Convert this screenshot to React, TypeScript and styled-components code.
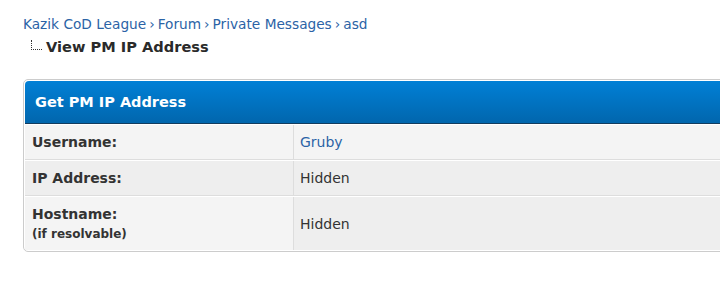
import styled, { createGlobalStyle } from 'styled-components';

const GlobalStyle = createGlobalStyle`
	body {
		margin: 0;
		background: #fff;
		font-family: "DejaVu Sans", Verdana, sans-serif;
		font-size: 13px;
		color: #333;
	}
`;

const Page = styled.div`
	padding: 15px 0 0 23px;
	overflow: hidden;
	height: 299px;
	box-sizing: border-box;
`;

const Breadcrumb = styled.nav`
	display: flex;
	font-size: 13.7px;
	line-height: 18px;
`;

const Crumb = styled.a`
	color: #2b63a6;
	text-decoration: none;
`;

const Sep = styled.span`
	color: #2b63a6;
	padding: 0 3px;
`;

const TitleRow = styled.div`
	display: flex;
	align-items: flex-end;
	gap: 4px;
	margin: 5px 0 0 8px;
`;

const TreeIcon = styled.span`
	width: 10px;
	height: 9px;
	margin-bottom: 6px;
	border-left: 1px dotted #333;
	border-bottom: 1px dotted #333;
`;

const Title = styled.h1`
	margin: 0;
	font-size: 14.6px;
	line-height: 18px;
	font-weight: bold;
	color: #2a2a2a;
`;

const Panel = styled.div`
	margin-top: 23px;
	width: 740px;
	border: 1px solid #ccc;
	border-radius: 5px;
	padding: 1px;
	background: #fff;
	overflow: hidden;
`;

const PanelHead = styled.div`
	height: 42px;
	display: flex;
	align-items: center;
	padding-left: 10px;
	background: linear-gradient(#0180d6, #0166ad);
	border-bottom: 1px solid #133c5e;
	border-radius: 4px 4px 0 0;
	color: #fff;
	font-weight: bold;
	font-size: 14.5px;
`;

const Row = styled.div<{ $h: number; $bg: string; $bgRight: string }>`
	display: grid;
	grid-template-columns: 269px 1fr;
	box-sizing: border-box;
	height: ${p => p.$h}px;
	border-top: 1px solid #fff;
	border-bottom: 1px solid #ddd;
	background: ${p => p.$bg};

	&:first-of-type {
		border-top: none;
	}

	&:last-child {
		border-bottom: none;
	}

	& > div:last-child {
		background: ${p => p.$bgRight};
	}
`;

const Label = styled.div`
	display: flex;
	flex-direction: column;
	justify-content: center;
	padding-left: 7px;
	border-right: 1px solid #ddd;
	box-shadow: 1px 0 0 #fff;
	font-weight: bold;
	font-size: 14px;
	line-height: 20px;
	color: #333;
`;

const Hint = styled.span`
	font-size: 12px;
`;

const Value = styled.div`
	display: flex;
	align-items: center;
	padding-left: 6px;
	font-size: 14px;
	color: #333;
`;

const ValueLink = styled.a`
	color: #2b63a6;
	text-decoration: none;
`;

const App = () => {
	const crumbs = ['Kazik CoD League', 'Forum', 'Private Messages', 'asd'];

	return (
		<>
			<GlobalStyle />
			<Page>
				<Breadcrumb>
					{crumbs.map((c, i) => (
						<span key={c}>
							<Crumb href="#">{c}</Crumb>
							{i < crumbs.length - 1 && <Sep>›</Sep>}
						</span>
					))}
				</Breadcrumb>
				<TitleRow>
					<TreeIcon />
					<Title>View PM IP Address</Title>
				</TitleRow>
				<Panel>
					<PanelHead>Get PM IP Address</PanelHead>
					<Row $h={36} $bg="#f4f4f4" $bgRight="#f4f4f4">
						<Label>Username:</Label>
						<Value>
							<ValueLink href="#">Gruby</ValueLink>
						</Value>
					</Row>
					<Row $h={36} $bg="#eee" $bgRight="#eee">
						<Label>IP Address:</Label>
						<Value>Hidden</Value>
					</Row>
					<Row $h={54} $bg="#f4f4f4" $bgRight="#eee">
						<Label>
							Hostname:
							<Hint>(if resolvable)</Hint>
						</Label>
						<Value>Hidden</Value>
					</Row>
				</Panel>
			</Page>
		</>
	);
};

export default App;
